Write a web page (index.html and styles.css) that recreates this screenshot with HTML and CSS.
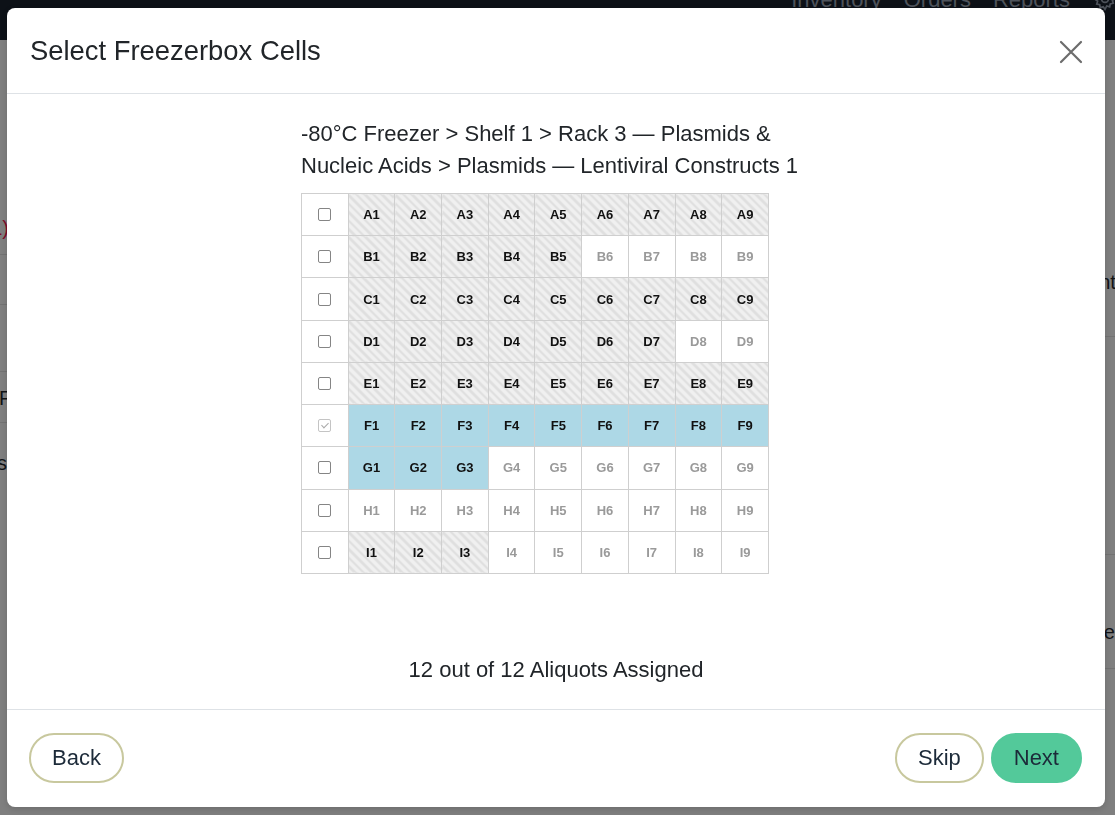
FILE: index.html
```html
<!DOCTYPE html>
<html lang="en">
<head>
    <meta charset="UTF-8">
    <meta name="viewport" content="width=device-width, initial-scale=1.0">
    <title>Select Freezerbox Cells</title>
    <link rel="stylesheet" href="styles.css">
</head>
<body>
    <nav class="topbar">
        <div class="topbar-links">
            <a href="#">Inventory</a>
            <a href="#">Orders</a>
            <a href="#">Reports</a>
            <svg class="gear" width="26" height="26" viewBox="0 0 24 24" fill="none" stroke="#4d525a" stroke-width="1.6">
                <circle cx="12" cy="12" r="3.2"/>
                <path d="M12 2.5l1.6 2.3 2.7-.8.6 2.7 2.7.6-.8 2.7 2.3 1.6-2.3 1.6.8 2.7-2.7.6-.6 2.7-2.7-.8L12 21.5l-1.6-2.3-2.7.8-.6-2.7-2.7-.6.8-2.7L2.5 12l2.3-1.6-.8-2.7 2.7-.6.6-2.7 2.7.8z"/>
            </svg>
        </div>
    </nav>

    <!-- page behind the dialog, mostly hidden -->
    <div class="page">
        <div class="side side-left">
            <div class="bg-row row-l1"><span class="bg-red">Lentiviral (1)</span></div>
            <div class="bg-row row-l2"></div>
            <div class="bg-row row-l3"></div>
            <div class="bg-row row-l4 start"><span>Freezer</span></div>
            <div class="bg-row row-l5"><span>Constructs</span></div>
        </div>
        <div class="side side-right">
            <div class="bg-row row-r1"><span>Amount</span></div>
            <div class="bg-row row-r2"></div>
            <div class="bg-row row-r3"><span>Size</span></div>
            <div class="bg-row row-r4"></div>
        </div>
    </div>

    <div class="modal">
        <div class="modal-header">
            <h2 class="modal-title">Select Freezerbox Cells</h2>
            <button class="close-btn" aria-label="Close">
                <svg width="24" height="24" viewBox="0 0 24 24" stroke="#6c6c6c" stroke-width="2.2" stroke-linecap="round">
                    <path d="M2 2L22 22M22 2L2 22"/>
                </svg>
            </button>
        </div>
        <div class="modal-body">
            <div class="box-wrap">
                <div class="box-path">-80°C Freezer &gt; Shelf 1 &gt; Rack 3 — Plasmids &amp; Nucleic Acids &gt; Plasmids — Lentiviral Constructs 1</div>
                <table class="box-grid" id="box-grid"></table>
            </div>
            <div class="summary">12 out of 12 Aliquots Assigned</div>
        </div>
        <div class="modal-footer">
            <button class="btn btn-outline">Back</button>
            <div class="footer-right">
                <button class="btn btn-outline">Skip</button>
                <button class="btn btn-next">Next</button>
            </div>
        </div>
    </div>

    <script>
        // o = occupied, s = selected, e = empty
        const layout = {
            A: 'ooooooooo',
            B: 'oooooeeee',
            C: 'ooooooooo',
            D: 'oooooooee',
            E: 'ooooooooo',
            F: 'sssssssss',
            G: 'ssseeeeee',
            H: 'eeeeeeeee',
            I: 'oooeeeeee'
        };
        const classes = { o: 'cell occupied', s: 'cell selected', e: 'cell empty' };
        const grid = document.getElementById('box-grid');

        Object.keys(layout).forEach(function(row) {
            const tr = document.createElement('tr');
            const checkCell = document.createElement('td');
            checkCell.className = 'check-cell';
            const box = document.createElement('input');
            box.type = 'checkbox';
            if (row === 'F') {
                box.checked = true;
                box.disabled = true;
            }
            checkCell.appendChild(box);
            tr.appendChild(checkCell);

            layout[row].split('').forEach(function(state, i) {
                const td = document.createElement('td');
                td.className = classes[state];
                td.textContent = row + (i + 1);
                tr.appendChild(td);
            });
            grid.appendChild(tr);
        });
    </script>
</body>
</html>
```

FILE: styles.css
```css
body {
    margin: 0;
    font-family: "Liberation Sans", Arial, sans-serif;
    background-color: #7f7f7f;
    color: #212529;
    overflow: hidden;
}
.topbar {
    height: 40px;
    background-color: #0d1117;
    display: flex;
    justify-content: flex-end;
    overflow: hidden;
}
.topbar-links {
    display: flex;
    align-items: flex-start;
    gap: 22px;
    margin-top: -12px;
    margin-right: -3px;
}
.topbar-links a {
    color: #4e535b;
    text-decoration: none;
    font-size: 22px;
    line-height: 24px;
}
.topbar-links .gear {
    margin-top: -2px;
}
.page {
    display: flex;
    justify-content: space-between;
}
.side {
    display: flex;
    flex-direction: column;
    overflow: hidden;
}
.side-left {
    width: 8px;
}
.side-right {
    width: 12px;
    padding-left: 1103px;
    position: absolute;
    top: 40px;
}
.bg-row {
    display: flex;
    align-items: center;
    justify-content: flex-end;
    border-bottom: 1px solid #727272;
    white-space: nowrap;
    font-size: 20px;
    color: #111316;
}
.side-right .bg-row {
    justify-content: flex-start;
}
.bg-row.start {
    justify-content: flex-start;
}
.bg-red {
    color: #7d0b28;
}
.row-l1 { height: 214px; align-items: flex-end; }
.row-l1 span { margin-bottom: 14px; margin-right: -1px; }
.row-l2 { height: 49px; }
.row-l3 { height: 66px; }
.row-l4 { height: 50px; }
.row-l4 span { margin-left: -1px; margin-top: 2px; }
.row-l5 { height: 80px; border-bottom: none; }
.row-l5 span { margin-right: 1px; }
.row-r1 { height: 296px; align-items: flex-end; }
.row-r1 span { margin-bottom: 42px; margin-left: -56px; }
.row-r2 { height: 217px; }
.row-r3 { height: 113px; align-items: flex-end; }
.row-r3 span { margin-bottom: 24px; margin-left: -27px; }
.row-r4 { height: 160px; border-bottom: none; }

.modal {
    position: fixed;
    left: 7px;
    top: 8px;
    width: 1098px;
    height: 799px;
    background-color: #fff;
    border-radius: 8px;
    display: flex;
    flex-direction: column;
    box-shadow: 0 2px 6px rgba(0, 0, 0, 0.15);
}
.modal-header {
    height: 85px;
    flex-shrink: 0;
    display: flex;
    align-items: center;
    justify-content: space-between;
    padding: 0 22px 0 23px;
    border-bottom: 1px solid #dee2e6;
}
.modal-title {
    margin: 0;
    font-size: 27.4px;
    font-weight: normal;
    color: #212529;
}
.close-btn {
    border: none;
    background: none;
    padding: 0;
    width: 24px;
    height: 24px;
    margin-top: 2px;
    cursor: pointer;
}
.modal-body {
    flex: 1;
    display: flex;
    flex-direction: column;
    padding-top: 24px;
}
.box-wrap {
    width: 510px;
    margin: 0 auto;
}
.box-path {
    font-size: 22px;
    line-height: 32px;
    color: #212529;
}
.box-grid {
    margin-top: 11px;
    border-collapse: collapse;
    table-layout: fixed;
    width: 468px;
    height: 381px;
}
.box-grid td {
    border: 1px solid #cfcfcf;
    text-align: center;
    font-size: 13px;
    font-weight: bold;
    padding: 0;
}
.check-cell {
    background-color: #fff;
}
.check-cell input {
    appearance: none;
    -webkit-appearance: none;
    display: block;
    margin: 0 auto;
    width: 13px;
    height: 13px;
    border: 1px solid #858585;
    border-radius: 2px;
    background-color: #fff;
    position: relative;
}
.check-cell input:checked {
    border-color: #c4c4c4;
}
.check-cell input:checked::after {
    content: "";
    position: absolute;
    left: 3.5px;
    top: 1px;
    width: 3px;
    height: 6px;
    border: solid #a9a9a9;
    border-width: 0 1px 1px 0;
    transform: rotate(45deg);
}
.cell.occupied {
    color: #111;
    background: repeating-linear-gradient(45deg, #f0f0f0 0, #f0f0f0 3.5px, #dfdfdf 3.5px, #dfdfdf 6px);
}
.cell.selected {
    color: #111;
    background-color: #add8e6;
}
.cell.empty {
    color: #9a9a9a;
    background-color: #fff;
}
.summary {
    margin-top: auto;
    padding-bottom: 24px;
    text-align: center;
    font-size: 22px;
    line-height: 30px;
    color: #212529;
}
.modal-footer {
    flex-shrink: 0;
    display: flex;
    justify-content: space-between;
    align-items: center;
    padding: 23px 23px 24px 22px;
    border-top: 1px solid #dee2e6;
}
.footer-right {
    display: flex;
    gap: 7px;
}
.btn {
    height: 50px;
    padding: 0 21px;
    border-radius: 25px;
    font-family: "Liberation Sans", Arial, sans-serif;
    font-size: 22px;
    color: #1c2a39;
    cursor: pointer;
}
.btn-outline {
    background-color: #fff;
    border: 2px solid #c8c89e;
}
.btn-next {
    background-color: #53c99a;
    border: 2px solid #53c99a;
}
```
